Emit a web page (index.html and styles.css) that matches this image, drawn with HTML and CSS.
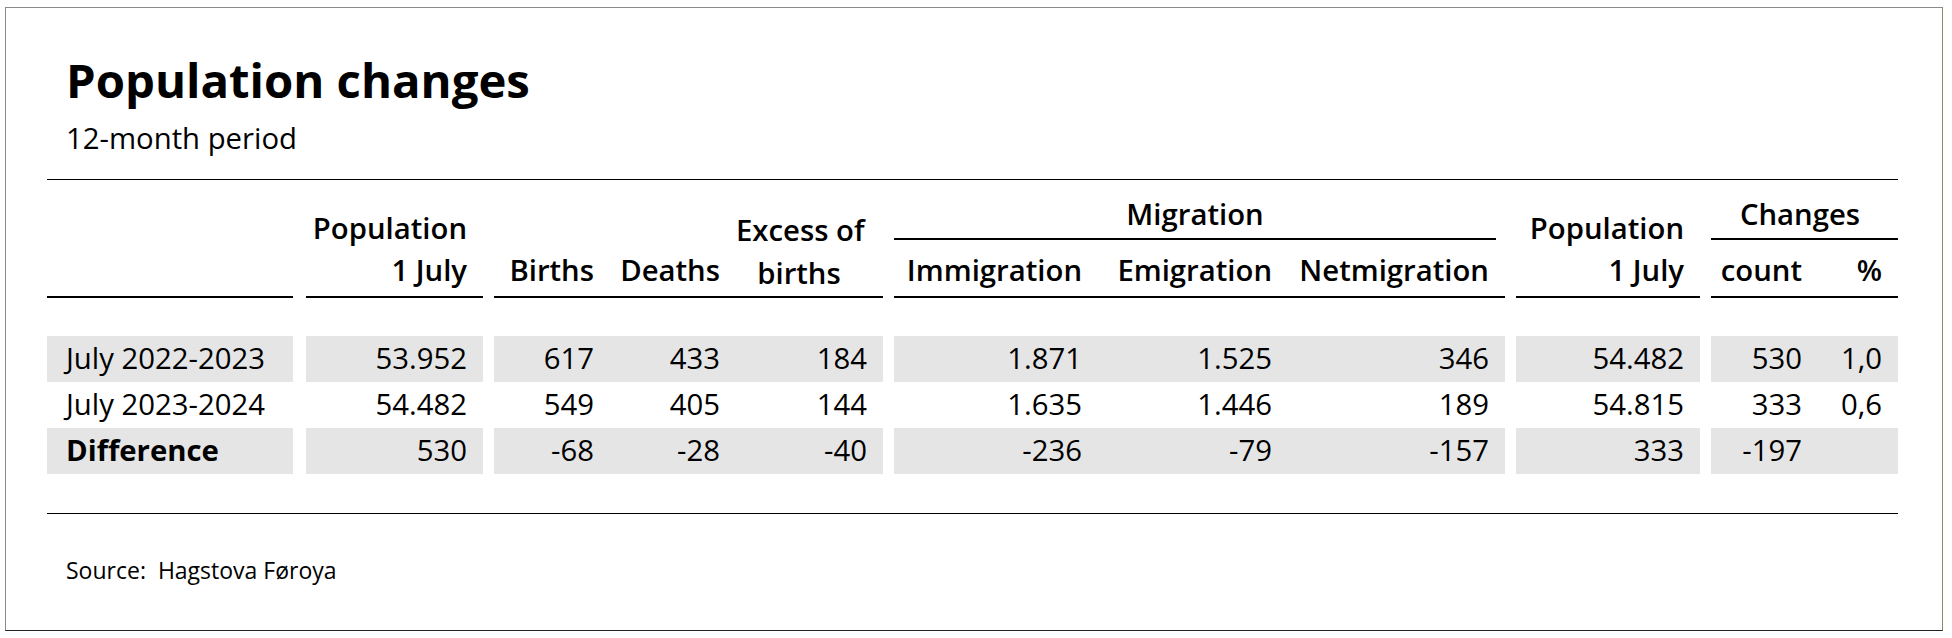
FILE: index.html
```html
<!DOCTYPE html>
<html lang="en">
<head>
<meta charset="utf-8">
<title>Population changes</title>
<link rel="stylesheet" href="styles.css">
</head>
<body>
<div class="card">
  <h1 class="title">Population changes</h1>
  <p class="subtitle">12-month period</p>
  <div class="rule rule-top"></div>
  <table class="tbl">
    <colgroup>
      <col class="c-lab"><col class="c-gap1"><col class="c-pop"><col class="c-gap">
      <col class="c-births"><col class="c-deaths"><col class="c-excess"><col class="c-gap">
      <col class="c-imm"><col class="c-emi"><col class="c-net"><col class="c-gap">
      <col class="c-pop2"><col class="c-gap"><col class="c-cnt"><col class="c-pct">
    </colgroup>
    <thead>
      <tr class="hr1">
        <th class="lab rs" rowspan="2"></th>
        <th class="gap" rowspan="2"></th>
        <th class="num rs" rowspan="2">Population<br>1 July</th>
        <th class="gap" rowspan="2"></th>
        <th class="num rs" rowspan="2">Births</th>
        <th class="num rs" rowspan="2">Deaths</th>
        <th class="ctr rs excess" rowspan="2">Excess of<br>births</th>
        <th class="gap" rowspan="2"></th>
        <th class="grp mig" colspan="3"><span class="grp-label">Migration</span></th>
        <th class="gap" rowspan="2"></th>
        <th class="num rs" rowspan="2">Population<br>1 July</th>
        <th class="gap" rowspan="2"></th>
        <th class="grp chg" colspan="2"><span class="grp-label">Changes</span></th>
      </tr>
      <tr class="hr2">
        <th class="num sub">Immigration</th>
        <th class="num sub">Emigration</th>
        <th class="num sub">Netmigration</th>
        <th class="num sub">count</th>
        <th class="num sub">%</th>
      </tr>
    </thead>
    <tbody>
      <tr class="spacer"><td colspan="16"></td></tr>
      <tr class="row shade">
        <td class="lab">July 2022-2023</td><td class="gap"></td>
        <td class="num">53.952</td><td class="gap"></td>
        <td class="num">617</td><td class="num">433</td><td class="num">184</td><td class="gap"></td>
        <td class="num">1.871</td><td class="num">1.525</td><td class="num">346</td><td class="gap"></td>
        <td class="num">54.482</td><td class="gap"></td>
        <td class="num">530</td><td class="num">1,0</td>
      </tr>
      <tr class="row">
        <td class="lab">July 2023-2024</td><td class="gap"></td>
        <td class="num">54.482</td><td class="gap"></td>
        <td class="num">549</td><td class="num">405</td><td class="num">144</td><td class="gap"></td>
        <td class="num">1.635</td><td class="num">1.446</td><td class="num">189</td><td class="gap"></td>
        <td class="num">54.815</td><td class="gap"></td>
        <td class="num">333</td><td class="num">0,6</td>
      </tr>
      <tr class="row shade">
        <td class="lab strong">Difference</td><td class="gap"></td>
        <td class="num">530</td><td class="gap"></td>
        <td class="num">-68</td><td class="num">-28</td><td class="num">-40</td><td class="gap"></td>
        <td class="num">-236</td><td class="num">-79</td><td class="num">-157</td><td class="gap"></td>
        <td class="num">333</td><td class="gap"></td>
        <td class="num">-197</td><td class="num"></td>
      </tr>
    </tbody>
  </table>
  <div class="rule rule-bottom"></div>
  <p class="source">Source:&nbsp; Hagstova Føroya</p>
</div>
</body>
</html>
```

FILE: styles.css
```css
* { box-sizing: border-box; }

html, body {
  margin: 0;
  padding: 0;
  background: #ffffff;
}

body {
  font-family: "Open Sans", "Noto Sans", "Liberation Sans", sans-serif;
  color: #000000;
  padding: 7px 0 0 5px;
}

.card {
  width: 1938px;
  height: 624px;
  border: 1px solid #8a8a8a;
  border-right-color: #8e8a60;
  border-bottom-color: #222222;
  padding: 42px 44px 0 41px;
}

.title {
  margin: 0;
  padding-left: 19px;
  font-size: 47.3px;
  line-height: 60px;
  font-weight: 700;
}

.subtitle {
  margin: 7px 0 0;
  padding-left: 19px;
  font-size: 29.3px;
  line-height: 42px;
  font-weight: 400;
}

.rule {
  width: 1851px;
  height: 1px;
  background: #000000;
}

.rule-top { margin-top: 20px; }
.rule-bottom { margin-top: 39px; }

.tbl {
  width: 1851px;
  table-layout: fixed;
  border-collapse: separate;
  border-spacing: 0;
  font-size: 29.3px;
  line-height: 42px;
}

.c-lab { width: 246px; }
.c-gap1 { width: 13px; }
.c-gap { width: 11px; }
.c-pop { width: 177px; }
.c-births { width: 116px; }
.c-deaths { width: 126px; }
.c-excess { width: 147px; }
.c-imm { width: 204px; }
.c-emi { width: 190px; }
.c-net { width: 217px; }
.c-pop2 { width: 184px; }
.c-cnt { width: 107px; }
.c-pct { width: 80px; }

.tbl th {
  font-weight: 600;
  white-space: nowrap;
  vertical-align: bottom;
  padding: 0 16px 5px 0;
}

.tbl th.num { text-align: right; }
.tbl th.ctr { text-align: center; }

.tbl th.rs {
  border-bottom: 2px solid #000000;
}

.tbl th.excess {
  line-height: 43px;
  padding-bottom: 1px;
  padding-right: 21px;
}

.tbl th.gap { padding: 0; }

.hr1 th.grp {
  height: 60px;
  padding: 0;
  vertical-align: bottom;
}

.grp-label {
  display: block;
  text-align: center;
  line-height: 42px;
  padding-bottom: 3px;
  border-bottom: 2px solid #000000;
}

.mig .grp-label { margin-right: 9px; }
.chg .grp-label { padding-right: 9px; }

.hr2 th.sub {
  height: 58px;
  border-bottom: 2px solid #000000;
}

.spacer td {
  height: 38px;
  padding: 0;
}

.row td {
  height: 46px;
  padding: 1px 16px 0 0;
  vertical-align: top;
  white-space: nowrap;
  font-weight: 400;
}

.row td.num { text-align: right; }
.row td.lab { padding-left: 19px; text-align: left; }
.row td.strong { font-weight: 700; }
.row td.gap { padding: 0; background: transparent; }

.shade td { background: #e5e5e5; }
.shade td.gap { background: transparent; }

.source {
  margin: 40px 0 0;
  padding-left: 19px;
  font-size: 23px;
  line-height: 32px;
  white-space: pre;
}
```
